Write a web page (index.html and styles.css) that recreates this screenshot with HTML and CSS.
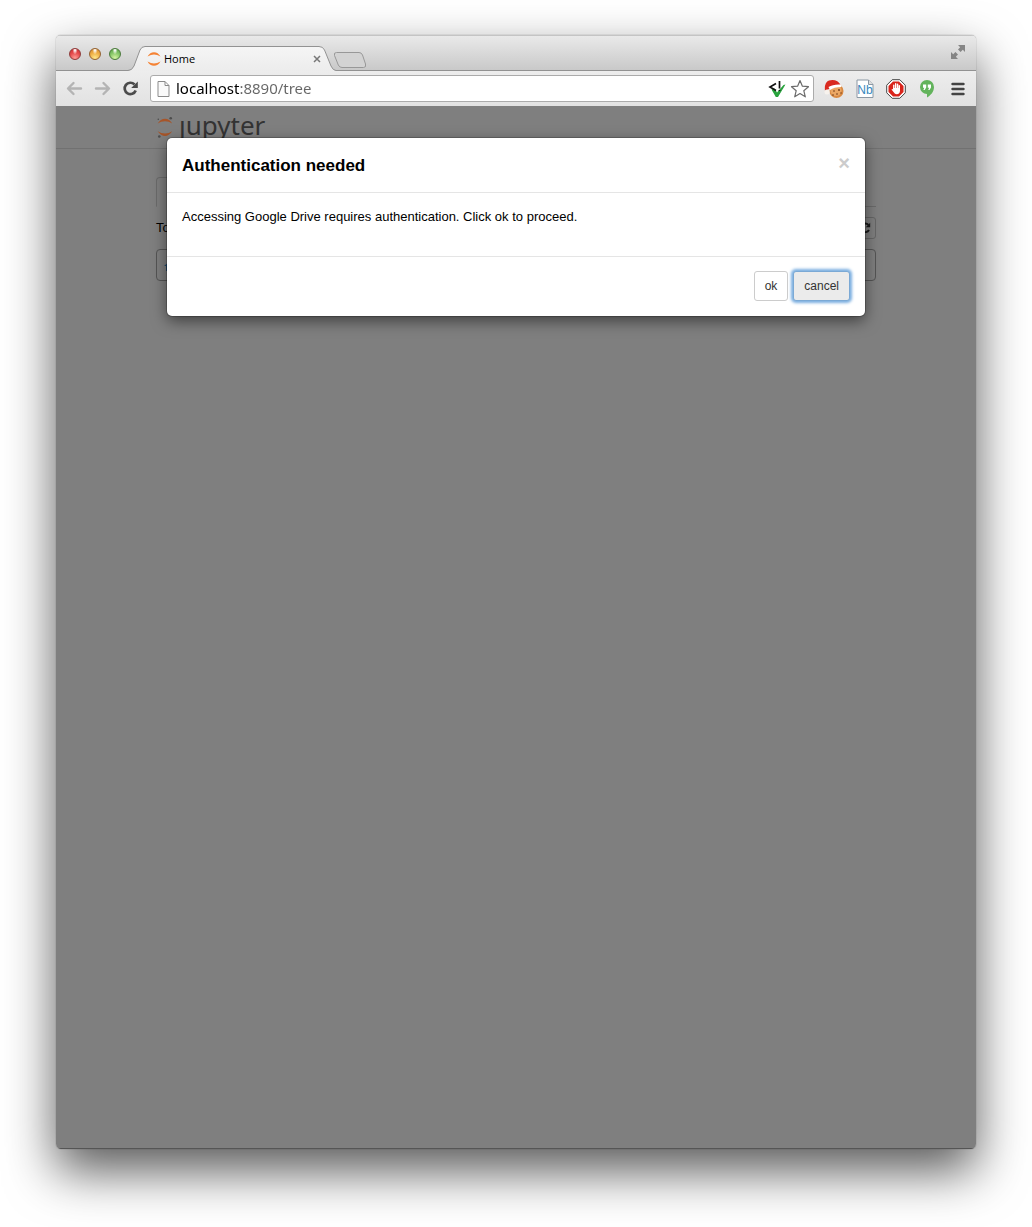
FILE: index.html
```html
<!DOCTYPE html>
<html lang="en">
<head>
<meta charset="utf-8">
<title>Home</title>
<link rel="stylesheet" href="styles.css">
</head>
<body>
<div class="window">
  <header class="titlebar">
    <div class="lights">
      <button class="light red" aria-label="Close window"></button>
      <button class="light amber" aria-label="Minimise window"></button>
      <button class="light green" aria-label="Zoom window"></button>
    </div>
    <div class="tab">
      <svg class="tab-shape" viewBox="0 0 208 26" aria-hidden="true">
        <defs><linearGradient id="tabfill" x1="0" y1="0" x2="0" y2="1"><stop offset="0" stop-color="#f5f5f5"/><stop offset="1" stop-color="#ececec"/></linearGradient></defs>
        <path d="M0 24.500Q4 24.500 6 20L12 4Q13.500.500 17 .500H191Q195 .500 196.500 4L203 20Q205 24.500 208 24.500V26H0Z" fill="url(#tabfill)"/>
        <path d="M0 24.500Q4 24.500 6 20L12 4Q13.500.500 17 .500H191Q195 .500 196.500 4L203 20Q205 24.500 208 24.500" fill="none" stroke="#929292"/>
      </svg>
      <div class="tab-content">
        <svg width="14" height="14" viewBox="0 0 14 14" aria-hidden="true"><path d="M.5 4.500Q3 .200 7 .200T13.500 4.500Q10 2.600 7 2.600T.5 4.500ZM.5 9.500Q3 13.800 7 13.800T13.500 9.500Q10 11.400 7 11.400T.5 9.500Z" fill="#f58233"/></svg>
        <span class="tab-title">Home</span>
        <button class="tab-close" aria-label="Close tab"><svg width="8" height="8" viewBox="0 0 8 8"><path d="M1 1L7 7M7 1L1 7" stroke="#777" stroke-width="1.500"/></svg></button>
      </div>
    </div>
    <button class="new-tab" aria-label="New tab"><svg width="34" height="18" viewBox="0 0 34 18"><path d="M3.500 1.500H26Q28.500 1.500 29.500 4L32.500 13Q33.500 16.500 30.500 16.500H9Q6.500 16.500 5.300 14L1.500 4.500Q.5 1.500 3.500 1.500Z" fill="#d3d3d3" stroke="#989898"/></svg></button>
    <button class="expand" aria-label="Full screen"><svg width="16" height="16" viewBox="0 0 16 16"><path d="M8 1H15V8L12.800 5.800L10.600 8L8 5.400L10.200 3.200ZM1 8V15H8L5.800 12.800L8 10.600L5.400 8L3.200 10.200Z" fill="#858585"/></svg></button>
  </header>

  <nav class="toolbar" aria-label="Browser">
    <button class="nav" aria-label="Back"><svg width="17" height="15" viewBox="0 0 17 15"><path d="M7.500 2L2 7.500L7.500 13M2.500 7.500H15" fill="none" stroke="#b4b4b4" stroke-width="2.400" stroke-linecap="round" stroke-linejoin="round"/></svg></button>
    <button class="nav" aria-label="Forward"><svg width="17" height="15" viewBox="0 0 17 15"><path d="M9.500 2L15 7.500L9.500 13M14.500 7.500H2" fill="none" stroke="#b4b4b4" stroke-width="2.400" stroke-linecap="round" stroke-linejoin="round"/></svg></button>
    <button class="nav" aria-label="Reload"><svg width="17" height="17" viewBox="0 0 17 17"><path d="M12.500 4.500A5.700 5.700 0 1 0 13.700 10.500" fill="none" stroke="#4b4b4b" stroke-width="2.700"/><path d="M15.800 1.500V8H9.200Z" fill="#4b4b4b"/></svg></button>
    <div class="address">
      <svg width="13" height="16" viewBox="0 0 13 16" aria-hidden="true"><path d="M1 .500H8L12 4.500V15.500H1ZM8 .500V4.500H12" fill="#fafafa" stroke="#8b8b8b"/></svg>
      <input class="url" type="text" aria-label="Address" value="localhost:8890/tree">
      <svg width="18" height="18" viewBox="0 0 18 18" aria-hidden="true"><path d="M3.500 9.500L6.500 8.500L9 12.500L15.500 5L17.500 4.500L10 17H7.800Z" fill="#29a33e"/><path d="M8 3.500L2 7L8 10.500M11.500 1V8.500M11.500 10V11" fill="none" stroke="#111" stroke-width="1.700"/></svg>
      <button class="star" aria-label="Bookmark"><svg width="20" height="20" viewBox="0 0 20 20"><path d="M10 1.500L12.400 7.200L18.500 7.700L13.800 11.700L15.300 17.800L10 14.500L4.700 17.800L6.200 11.700L1.500 7.700L7.600 7.200Z" fill="#fff" stroke="#6c6c6c" stroke-width="1.200" stroke-linejoin="round"/></svg></button>
    </div>
    <div class="extensions">
      <button aria-label="Cookies"><svg width="20" height="20" viewBox="0 0 20 20"><circle cx="12.500" cy="12" r="7" fill="#d98a43"/><circle cx="12" cy="11.500" r="5.500" fill="#eba663"/><path d="M1 12Q0 3.500 5 1.500Q13-.500 17 6.500L5 10Z" fill="#d92a20"/><path d="M4.500 8Q9 5 17 5.500L17.500 8Q10 8 6 11Z" fill="#fff"/><circle cx="3" cy="13" r="2.500" fill="#f7f2ed"/><g fill="#6c3513"><circle cx="10" cy="12" r=".8"/><circle cx="15" cy="11" r=".9"/><circle cx="13" cy="15" r=".8"/><circle cx="9" cy="16" r=".8"/><circle cx="17" cy="14" r=".7"/></g></svg></button>
      <button aria-label="Notebook viewer"><svg width="18" height="20" viewBox="0 0 18 20"><path d="M1 1H12.500L17 5.500V18.500H1Z" fill="#fff" stroke="#8b98a4"/><path d="M12.500 1V5.500H17" fill="#ddd" stroke="#8b98a4"/><text x="9" y="15" text-anchor="middle" class="nb">Nb</text></svg></button>
      <button aria-label="Ad blocker"><svg width="20" height="20" viewBox="0 0 20 20"><path d="M6.200 .700H13.800L19.300 6.200V13.800L13.800 19.300H6.200L.7 13.800V6.200Z" fill="#fff" stroke="#444"/><path d="M7 2.500H13L17.500 7V13L13 17.500H7L2.500 13V7Z" fill="#d9241b"/><path d="M7.800 10V6.200M9.700 10V4.800M11.600 10V5.200M13.300 10V6.800" stroke="#fff" stroke-width="1.400" stroke-linecap="round"/><path d="M7 9H14V12Q13.500 15.300 10.800 15.300Q8.800 15.300 7.500 13L5.500 10.500Q6.300 9.500 7.300 10.800Z" fill="#fff"/></svg></button>
      <button aria-label="Hangouts"><svg width="16" height="20" viewBox="0 0 16 20"><path d="M8 1A7 7 0 0 1 15 8C15 13 11.500 16.500 8 18.500V15A7 7 0 0 1 8 1Z" fill="#63b35c"/><path d="M4 5.500H7.200V8.500L5.700 11H4.400L5.300 8.700H4ZM8.800 5.500H12V8.500L10.500 11H9.200L10.100 8.700H8.800Z" fill="#fff"/></svg></button>
      <button aria-label="Menu"><svg width="14" height="14" viewBox="0 0 14 14"><path d="M1.500 2H12.500M1.500 7H12.500M1.500 12H12.500" stroke="#444" stroke-width="2.400" stroke-linecap="round"/></svg></button>
    </div>
  </nav>

  <main class="page">
    <div class="page-header">
      <div class="logo">
        <svg width="18" height="24" viewBox="0 0 18 24" aria-hidden="true"><path d="M1.700 9.500Q4.500 4.700 9 4.700T16.200 9.500Q13 7.200 9 7.200T1.700 9.500ZM1.700 17.200Q5 22 9 22T16.200 17.200Q13 19.500 9 19.500T1.700 17.200Z" fill="#a75529"/><g fill="#4d4d4d"><circle cx="2.300" cy="5.300" r=".8"/><circle cx="14.700" cy="4.300" r="1.300"/><circle cx="3.300" cy="22.500" r="1.300"/></g></svg>
        <span>ȷupyter</span>
      </div>
    </div>
    <div class="tree">
      <div class="tabs"><div class="active-tab"></div></div>
      <div class="actions"><span>To</span>
        <button class="refresh" aria-label="Refresh"><svg width="12" height="12" viewBox="0 0 12 12"><path d="M9.500 3A4.300 4.300 0 1 0 10 8" fill="none" stroke="#1b1b1b" stroke-width="1.900"/><path d="M11.200 .800V5.200H6.800Z" fill="#1b1b1b"/></svg></button>
      </div>
      <div class="listing"><svg width="12" height="12" viewBox="0 0 12 12" aria-hidden="true"><path d="M0 6L6 1L12 6H10V11H2V6Z" fill="#234a6c"/></svg></div>
    </div>
    <section class="dialog" role="dialog" aria-labelledby="dialog-title">
      <header class="dialog-header">
        <h4 id="dialog-title">Authentication needed</h4>
        <button class="dismiss" aria-label="Close">×</button>
      </header>
      <p class="dialog-body">Accessing Google Drive requires authentication. Click ok to proceed.</p>
      <footer class="dialog-footer">
        <button class="btn">ok</button>
        <button class="btn focused">cancel</button>
      </footer>
    </section>
  </main>
</div>
</body>
</html>
```
FILE: styles.css
```css
* { box-sizing: border-box; }
body {
  margin: 0;
  min-height: 100vh;
  display: flex;
  padding: 35px 56px 78px;
  background: #fff;
  font-family: "Liberation Sans", Arial, sans-serif;
  overflow: hidden;
}
button { padding: 0; border: 0; background: none; font: inherit; color: inherit; }
svg { display: block; }
.window {
  flex: 1;
  display: flex;
  flex-direction: column;
  border-radius: 5px;
  overflow: hidden;
  box-shadow: 0 22px 50px rgba(0, 0, 0, .65), 0 0 1px rgba(0, 0, 0, .6);
}
.titlebar {
  display: flex;
  align-items: flex-end;
  height: 36px;
  background: linear-gradient(#e9e9e9, #c8c8c8);
  border-top: 1px solid #c4c4c4;
  box-shadow: inset 0 -1px #929292;
}
.lights { display: flex; gap: 8px; padding: 0 7px 11px 13px; }
.light { width: 12px; height: 12px; border-radius: 50%; border: 1px solid; }
.red { background: radial-gradient(ellipse at 50% 10%, #fff 5%, transparent 35%), radial-gradient(circle at 50% 90%, #ff9d96, #e4484a 55%, #c9302f); border-color: #8f3c3b; }
.amber { background: radial-gradient(ellipse at 50% 10%, #fff 5%, transparent 35%), radial-gradient(circle at 50% 90%, #ffe98c, #eeac42 55%, #cf8630); border-color: #946332; }
.green { background: radial-gradient(ellipse at 50% 10%, #fff 5%, transparent 35%), radial-gradient(circle at 50% 90%, #d6f5a4, #83c466 55%, #569c46); border-color: #4b7a3c; }
.tab { display: grid; width: 208px; height: 25px; }
.tab-shape, .tab-content { grid-area: 1 / 1; }
.tab-shape { width: 208px; height: 26px; }
.tab-content { display: flex; align-items: center; gap: 3px; padding: 0 15px 0 19px; }
.tab-title { flex: 1; font: 11px/16px "Open Sans", sans-serif; color: #000; }
.new-tab { margin: 0 0 2px -3px; }
.expand { margin: 0 10px 11px auto; }
.toolbar {
  display: flex;
  align-items: center;
  height: 35px;
  padding: 0 3px 0 10px;
  background: linear-gradient(#ededed, #e2e2e2);
}
.nav { width: 28px; }
.address {
  flex: 1;
  display: flex;
  align-items: center;
  height: 27px;
  padding: 0 3px 0 6px;
  background: #fff;
  border: 1px solid #ababab;
  border-radius: 3px;
  gap: 4px;
}
/* The host is drawn black and the rest of the address grey. */
.url {
  flex: 1;
  min-width: 0;
  height: 22px;
  padding: 0 0 2px 2px;
  border: 0;
  font: 15px/20px "Noto Sans", sans-serif;
  color: transparent;
  background: linear-gradient(90deg, #000 66px, #666 66px);
  background-clip: text;
  -webkit-background-clip: text;
}
.extensions { display: grid; grid-template-columns: repeat(5, 31px); align-items: center; padding-left: 4px; }
.extensions button { display: grid; place-items: center; }
.nb { font: 12px "Liberation Sans", sans-serif; fill: #3787bd; }
.page {
  flex: 1;
  display: grid;
  grid-template-rows: 43px 1fr;
  background: #7f7f7f;
  box-shadow: inset 0 -1px #555;
}
.page-header { grid-area: 1 / 1; padding: 8px 100px 0; border-bottom: 1px solid #717171; }
.logo { display: flex; align-items: flex-start; gap: 5px; color: #333; font: 26px/22px "Noto Sans", sans-serif; }
.tree { grid-area: 2 / 1; padding: 28px 100px 0; font-size: 13px; line-height: 22px; }
.tabs { height: 30px; border-bottom: 1px solid #6b6b6b; }
.active-tab { width: 72px; height: 30px; border: 1px solid #6b6b6b; border-bottom-color: #7f7f7f; border-radius: 4px 4px 0 0; }
.actions { display: flex; justify-content: space-between; padding: 10px 0; }
.refresh { display: flex; align-items: center; width: 28px; height: 22px; justify-content: flex-end; padding-right: 4px; border: 1px solid #666; border-radius: 3px; }
.listing { height: 32px; padding: 10px 7px; border: 1px solid #555; border-radius: 4px; }
.dialog {
  grid-area: 1 / 1 / 3 / 2;
  align-self: start;
  z-index: 1;
  margin: 32px 111px 0;
  background: #fff;
  border-radius: 5px;
  box-shadow: 0 5px 15px rgba(0, 0, 0, .5), 0 0 0 1px rgba(0, 0, 0, .2);
}
.dialog-header { display: flex; justify-content: space-between; height: 55px; padding: 16px 15px 0; border-bottom: 1px solid #e5e5e5; }
h4 { margin: 0; font-size: 17px; line-height: 24px; font-weight: 700; }
.dismiss { height: 18px; font-size: 20px; line-height: 18px; font-weight: 700; color: #ccc; }
.dialog-body { height: 64px; margin: 0; padding: 14px 15px; font-size: 13px; line-height: 20px; border-bottom: 1px solid #e5e5e5; }
.dialog-footer { display: flex; justify-content: flex-end; gap: 5px; padding: 14px 15px 15px; }
.btn { height: 30px; padding: 0 10px; border: 1px solid #ccc; border-radius: 3px; background: #fff; color: #333; font-size: 12px; }
.focused { background: #ebebeb; border-color: #7ba9d5; box-shadow: 0 0 3px 2px #7aaee0; }
```
